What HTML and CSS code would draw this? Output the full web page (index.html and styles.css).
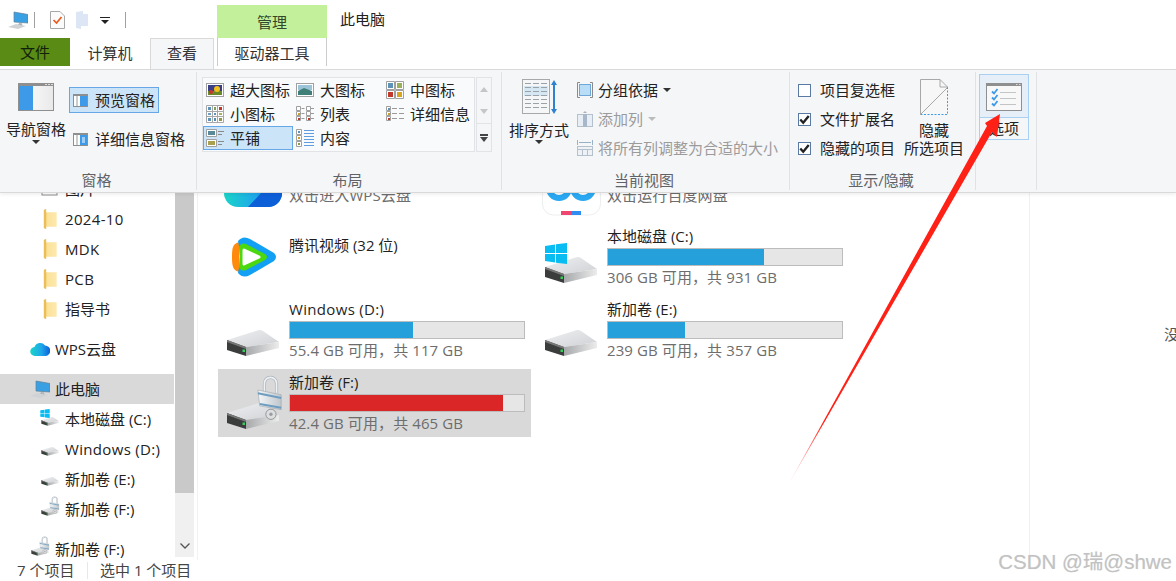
FILE: index.html
```html
<!DOCTYPE html>
<html lang="zh-CN">
<head>
<meta charset="utf-8">
<title>此电脑</title>
<link rel="stylesheet" href="styles.css">
</head>
<body>
<svg class="defs" aria-hidden="true">
  <defs>
    <linearGradient id="gDriveTop" x1="0" y1="0" x2="1" y2="1"><stop offset="0" stop-color="#eef0f2"/><stop offset="1" stop-color="#cfd1d4"/></linearGradient>
    <linearGradient id="gDriveSide" x1="0" y1="0" x2="1" y2="0"><stop offset="0" stop-color="#a6a8aa"/><stop offset="1" stop-color="#ececec"/></linearGradient>
    <linearGradient id="gCloud" x1="0" y1="0" x2="1" y2="0"><stop offset="0" stop-color="#19d4c8"/><stop offset=".55" stop-color="#1ea8ea"/><stop offset="1" stop-color="#0d5fd8"/></linearGradient>
    <linearGradient id="gFolder" x1="0" y1="0" x2="1" y2="0"><stop offset="0" stop-color="#f0c869"/><stop offset=".3" stop-color="#fbe29c"/><stop offset="1" stop-color="#fde8ad"/></linearGradient>
    <linearGradient id="gNav" x1="0" y1="0" x2="1" y2="0"><stop offset="0" stop-color="#fff"/><stop offset="1" stop-color="#e9e9e9"/></linearGradient>
    <linearGradient id="gLock" x1="0" y1="0" x2="1" y2="0"><stop offset="0" stop-color="#f4f6f8"/><stop offset="1" stop-color="#bfc6cc"/></linearGradient>
    <linearGradient id="gArrow" gradientUnits="userSpaceOnUse" x1="787" y1="487" x2="825" y2="421"><stop offset="0" stop-color="#ff2016" stop-opacity="0"/><stop offset="1" stop-color="#ff2016"/></linearGradient>

    <symbol id="drive" viewBox="0 0 71 68">
      <path d="M9 44 41 34Q43 33.500 45 35L61 46 28 51Z" fill="url(#gDriveTop)"/>
      <path d="M28 51 61 46 61 52 28 60Z" fill="url(#gDriveSide)"/>
      <path d="M9 44 28 51 28 60 9 54Z" fill="#3b3d3d"/>
      <path d="M9 44 28 51 28 53 9 46Z" fill="#777"/>
      <rect x="24.500" y="53.500" width="2.500" height="2.500" fill="#35d05a"/>
    </symbol>
    <symbol id="win" viewBox="0 0 22 21">
      <path d="M0 3 10 1.500V10H0ZM11 1.300 22 0V10H11ZM0 11H10V19.500L0 18ZM11 11H22V21L11 19.700Z" fill="#09bdf3"/>
    </symbol>
    <symbol id="lock" viewBox="0 0 30 48">
      <path d="M9 20V9a6.500 6.500 0 0 1 13 0V19" fill="none" stroke="#aab2ba" stroke-width="3.400"/>
      <path d="M9 20V9a6.500 6.500 0 0 1 13 0V19" fill="none" stroke="#eef1f4" stroke-width="1.800"/>
      <circle cx="16" cy="42" r="5.500" fill="#dcdedf" stroke="#8f9294"/>
      <circle cx="16" cy="42" r="1.800" fill="#9a9c9e"/>
      <path d="M2 16 27 21V37L4 33Z" fill="url(#gLock)" stroke="#9aa2a8" stroke-width=".6"/>
      <path d="M2 19.500 27 24.500M4 31 27 35" stroke="#6f9dc0" stroke-width="2.200" fill="none"/>
    </symbol>
    <symbol id="pc" viewBox="0 0 20 18">
      <path d="M0 16 8 13 18 15 10 18Z" fill="#cfd3d6"/>
      <path d="M6 1 20 3.500V12L6 11Z" fill="#3aa0e4" stroke="#5f7f96" stroke-width=".7"/>
      <path d="M11 12 14 12.200 14.500 14.500 10 13.800Z" fill="#b0b5ba"/>
    </symbol>
    <symbol id="folder" viewBox="0 0 13 18">
      <path d="M1 1 3 0V3H12.500V16H3V18L1 17Z" fill="url(#gFolder)"/>
      <path d="M1 1 3 0V18L1 17Z" fill="#eabf5a"/>
    </symbol>
    <symbol id="pane-nav" viewBox="0 0 36 28">
      <rect x=".5" y=".5" width="35" height="27" fill="url(#gNav)" stroke="#8f8f8f"/>
      <rect x="0" y="0" width="36" height="3" fill="#8f8f8f"/>
      <rect x="1" y="3" width="14" height="24" fill="#3d9ae8"/>
      <path d="M27 1.500h2M30 1.500h2M33 1.500h2" stroke="#ddd"/>
    </symbol>
    <symbol id="pane-small" viewBox="0 0 15 13">
      <rect x=".5" y=".5" width="14" height="12" fill="#fff" stroke="#8f8f8f"/>
      <rect x="0" y="0" width="15" height="2" fill="#8f8f8f"/>
      <rect x="3" y="2" width="2" height="10" fill="#ccc"/>
      <rect x="7" y="2" width="7" height="10" fill="#3d9ae8"/>
    </symbol>
    <symbol id="pane-details" viewBox="0 0 15 13">
      <rect x=".5" y=".5" width="14" height="12" fill="#fff" stroke="#8f8f8f"/>
      <rect x="0" y="0" width="15" height="2" fill="#8f8f8f"/>
      <rect x="3" y="2" width="2" height="10" fill="#ccc"/>
      <rect x="7" y="2" width="7" height="10" fill="#3d9ae8"/>
      <path d="M9 5h3M9 7h3M9 9h3" stroke="#fff"/>
    </symbol>
    <symbol id="v-xl" viewBox="0 0 18 14">
      <rect x=".5" y=".5" width="17" height="13" fill="#fff" stroke="#a0a0a0"/>
      <rect x="2" y="2" width="14" height="10" fill="#3b3f86"/>
      <rect x="2" y="8" width="14" height="4" fill="#6a8a2a"/>
      <circle cx="11" cy="6" r="3" fill="#f2c21a"/><circle cx="5" cy="9" r="2" fill="#c8342c"/>
    </symbol>
    <symbol id="v-lg" viewBox="0 0 18 14">
      <rect x=".5" y=".5" width="17" height="13" fill="#fff" stroke="#a0a0a0"/>
      <rect x="2" y="2" width="14" height="5" fill="#9cc4d8"/>
      <path d="M2 8 8 5 16 8V12H2Z" fill="#3f7f78"/>
    </symbol>
    <symbol id="v-md" viewBox="0 0 18 18">
      <path d="M.5.500h8v8h-8zM9.500.500h8v8h-8zM.5 9.500h8v8h-8zM9.500 9.500h8v8h-8z" fill="#fff" stroke="#a0a0a0"/>
      <rect x="2" y="2" width="5" height="5" fill="#5e93b8"/><rect x="11" y="2" width="5" height="5" fill="#9ab05a"/>
      <rect x="2" y="11" width="5" height="5" fill="#c0392b"/><rect x="11" y="11" width="5" height="5" fill="#d9a520"/>
    </symbol>
    <symbol id="v-sm" viewBox="0 0 18 18">
      <path d="M.5.500h17v17h-17zM6.500.500v17M11.500.500v17M.5 6.500h17M.5 11.500h17" fill="#fff" stroke="#a8a8a8"/>
      <path d="M2 2h3v3H2z" fill="#5e93b8"/><path d="M8 2h2v3H8z" fill="#7ba05a"/><path d="M13 2h3v3h-3z" fill="#c0392b"/>
      <path d="M2 8h3v2H2z" fill="#6f9fc0"/><path d="M8 8h2v2H8z" fill="#5e93b8"/><path d="M13 8h3v2h-3z" fill="#a9b45a"/>
      <path d="M2 13h3v3H2z" fill="#5e93b8"/><path d="M8 13h2v3H8z" fill="#4f8fb0"/><path d="M13 13h3v3h-3z" fill="#8c9a4a"/>
    </symbol>
    <symbol id="v-list" viewBox="0 0 18 16">
      <path d="M.5.500h4v4h-4zM.5 5.500h4v4h-4zM.5 10.500h4v4h-4zM10.500.500h4v4h-4zM10.500 5.500h4v4h-4zM10.500 10.500h4v4h-4z" fill="#fff" stroke="#a0a0a0"/>
      <path d="M5.500 2.500h3M5.500 7.500h3M5.500 12.500h3M15 2.500h3M15 7.500h3M15 12.500h3" stroke="#9a9a9a"/>
      <rect x="2" y="12" width="2" height="2" fill="#c0392b"/><rect x="12" y="12" width="2" height="2" fill="#c0392b"/><rect x="2" y="7" width="2" height="2" fill="#c9a227"/>
    </symbol>
    <symbol id="v-detail" viewBox="0 0 18 16">
      <path d="M.5.500h4v4h-4zM.5 5.500h4v4h-4zM.5 10.500h4v4h-4z" fill="#fff" stroke="#a0a0a0"/>
      <path d="M6 2.500h5M13 2.500h5M6 7.500h5M13 7.500h5M6 12.500h5M13 12.500h5" stroke="#9a9a9a"/>
      <rect x="2" y="2" width="2" height="2" fill="#5e93b8"/><rect x="2" y="7" width="2" height="2" fill="#c9a227"/><rect x="2" y="12" width="2" height="2" fill="#c0392b"/>
    </symbol>
    <symbol id="v-tile" viewBox="0 0 18 18">
      <path d="M.5.500h10v7h-10zM.5 10.500h10v7h-10z" fill="#fff" stroke="#a0a0a0"/>
      <rect x="2" y="2" width="7" height="4" fill="#5a8a9a"/><rect x="2" y="12" width="7" height="4" fill="#a9a050"/>
      <path d="M12 2.500h6M12 5.500h4M12 12.500h6M12 15.500h4" stroke="#8a8a8a"/>
    </symbol>
    <symbol id="v-content" viewBox="0 0 18 18">
      <path d="M.5.500h5v5h-5zM.5 6.500h5v5h-5zM.5 12.500h5v5h-5z" fill="#fff" stroke="#a0a0a0"/>
      <path d="M8 1.500h10M8 4.500h10M8 7.500h10M8 10.500h10M8 13.500h10M8 16.500h10" stroke="#5e9de0"/>
      <rect x="2" y="8" width="2" height="2" fill="#c9a227"/><rect x="2" y="14" width="2" height="2" fill="#8c9a4a"/><rect x="2" y="2" width="2" height="2" fill="#5e93b8"/>
    </symbol>
    <symbol id="check" viewBox="0 0 13 13">
      <path d="M1.500 6.500 5 10.300 11.500 2.500" fill="none" stroke="#222" stroke-width="2.800"/>
    </symbol>
  </defs>
</svg>

<div class="app">
  <header class="titlebar">
    <div class="qat">
      <svg class="ico-pc"><use href="#pc"/></svg>
      <span class="qat-sep first"></span>
      <svg class="ico-doc" viewBox="0 0 15 18"><path d="M.5.500H10L14.500 5V17.500H.5Z" fill="#fbfbfb" stroke="#a8a8a8"/><path d="M3.500 9 6.500 12 11.500 6" fill="none" stroke="#ea5a1c" stroke-width="1.700"/></svg>
      <svg class="ico-qfolder" viewBox="0 0 12 18"><path d="M0 1 7 0V3H12V15H5V18L0 17Z" fill="#dce6f4"/></svg>
      <svg class="ico-drop" viewBox="0 0 10 7"><path d="M0 0H10V1H0ZM1 3H9L5 7Z" fill="#222"/></svg>
      <span class="qat-sep"></span>
    </div>
    <div class="tab-manage">管理</div>
    <div class="window-title">此电脑</div>
  </header>

  <nav class="tabs">
    <div class="tab tab-file">文件</div>
    <div class="tab tab-computer">计算机</div>
    <div class="tab tab-view">查看</div>
    <div class="tab tab-drive">驱动器工具</div>
  </nav>

  <section class="ribbon">
    <div class="group g-pane">
      <div class="group-body">
        <div class="big-btn">
          <div class="big-ico"><svg class="ico-36"><use href="#pane-nav"/></svg></div>
          <div class="big-text">导航窗格</div>
          <div class="caret"></div>
        </div>
        <div class="pane-col">
          <div class="small-btn active"><svg class="ico-15"><use href="#pane-small"/></svg><span>预览窗格</span></div>
          <div class="small-btn"><svg class="ico-15"><use href="#pane-details"/></svg><span>详细信息窗格</span></div>
        </div>
      </div>
      <div class="group-label">窗格</div>
    </div>

    <div class="group g-layout">
      <div class="group-body">
        <div class="gallery">
          <div class="g-item"><svg class="ico-18"><use href="#v-xl"/></svg><span>超大图标</span></div>
          <div class="g-item"><svg class="ico-18"><use href="#v-lg"/></svg><span>大图标</span></div>
          <div class="g-item"><svg class="ico-18"><use href="#v-md"/></svg><span>中图标</span></div>
          <div class="g-item"><svg class="ico-18"><use href="#v-sm"/></svg><span>小图标</span></div>
          <div class="g-item"><svg class="ico-18"><use href="#v-list"/></svg><span>列表</span></div>
          <div class="g-item"><svg class="ico-18"><use href="#v-detail"/></svg><span>详细信息</span></div>
          <div class="g-item selected"><svg class="ico-18"><use href="#v-tile"/></svg><span>平铺</span></div>
          <div class="g-item"><svg class="ico-18"><use href="#v-content"/></svg><span>内容</span></div>
        </div>
        <div class="scroller">
          <div class="sc-cell"><i class="tri-up"></i></div>
          <div class="sc-cell"><i class="tri-down"></i></div>
          <div class="sc-cell more"><i class="bar"></i><i class="tri-down dark"></i></div>
        </div>
      </div>
      <div class="group-label">布局</div>
    </div>

    <div class="group g-view">
      <div class="group-body">
        <div class="big-btn">
          <div class="big-ico">
            <svg class="ico-sort" viewBox="0 0 35 36">
              <rect x=".5" y=".5" width="27" height="34" fill="#f4f6f8" stroke="#a8a8a8"/>
              <rect x="2" y="7" width="24" height="10" fill="#d4e7f3"/>
              <path d="M3 4.500h6M11 4.500h6M19 4.500h6M3 8.500h6M11 8.500h6M19 8.500h6M3 12.500h6M11 12.500h6M19 12.500h6M3 16.500h6M11 16.500h6M19 16.500h6M3 20.500h6M11 20.500h6M19 20.500h6M3 24.500h6M11 24.500h6M19 24.500h6M3 28.500h6M11 28.500h6M19 28.500h6" stroke="#9aa2a8"/>
              <path d="M32 1 35 6H33V30H35L32 35 29 30H31V6H29Z" fill="#2f82cf"/>
            </svg>
          </div>
          <div class="big-text">排序方式</div>
          <div class="caret"></div>
        </div>
        <div class="view-col">
          <div class="v-row">
            <svg class="ico-16" viewBox="0 0 16 16"><path d="M3 .5H.5v15H3M13 .5h2.500v15H13" fill="none" stroke="#8a8a8a"/><rect x="2.500" y="2.500" width="11" height="11" fill="#b9dcf7" stroke="#6fa8d8"/></svg>
            <span>分组依据</span><i class="caret inline"></i>
          </div>
          <div class="v-row dim">
            <svg class="ico-16" viewBox="0 0 16 16"><path d="M8 0 10 2H6Z" fill="#b0b0b0"/><rect x=".5" y="3.500" width="15" height="12" fill="#e8eef5" stroke="#b4c0cc"/><rect x="6" y="3" width="4" height="13" fill="#a9b8c8"/></svg>
            <span>添加列</span><i class="caret inline light"></i>
          </div>
          <div class="v-row dim">
            <svg class="ico-16" viewBox="0 0 16 16"><path d="M.5 0v5M15.500 0v5M2 2.500h12" stroke="#9ab0c4" fill="none"/><rect x=".5" y="6.500" width="15" height="9" fill="#eef2f6" stroke="#b4c0cc"/><path d="M.5 9.500h15M5.500 9.500v6M10.500 9.500v6" stroke="#b4c0cc"/></svg>
            <span>将所有列调整为合适的大小</span>
          </div>
        </div>
      </div>
      <div class="group-label">当前视图</div>
    </div>

    <div class="group g-show">
      <div class="group-body">
        <div class="check-col">
          <div class="c-row"><span class="box"></span><span>项目复选框</span></div>
          <div class="c-row"><span class="box"><svg class="ico-13"><use href="#check"/></svg></span><span>文件扩展名</span></div>
          <div class="c-row"><span class="box"><svg class="ico-13"><use href="#check"/></svg></span><span>隐藏的项目</span></div>
        </div>
        <div class="hide-btn">
          <svg class="ico-hide" viewBox="0 0 28 36"><path d="M.5.500H20L27.500 8V35.500H.5Z" fill="#f7f7f7"/><path d="M27.500 8V35.500H.5" fill="none" stroke="#3d9ae8" stroke-dasharray="2 1.500"/><path d="M.5 35.500V.5H20L27.500 8H20V.5M.5 35.500 27 9" fill="none" stroke="#a8a8a8"/></svg>
          <div class="hide-text">隐藏<br>所选项目</div>
        </div>
      </div>
      <div class="group-label">显示/隐藏</div>
    </div>

    <div class="group g-opt">
      <div class="opt-btn">
        <div class="opt-top">
          <svg class="ico-36" viewBox="0 0 36 28">
            <rect x=".5" y=".5" width="35" height="27" fill="#f8f8f8" stroke="#8f8f8f"/>
            <rect width="36" height="3" fill="#8f8f8f"/>
            <path d="M30 1.500h1.500M33 1.500h1.500" stroke="#ddd"/>
            <path d="M6 8.500 8 10.500 11.500 6M6 14.500 8 16.500 11.500 12M6 20.500 8 22.500 11.500 18" fill="none" stroke="#3d9ae8" stroke-width="1.800"/>
            <path d="M14 9.500H30M14 15.500H30M14 21.500H30" stroke="#c4c4c4"/>
          </svg>
        </div>
        <div class="opt-bottom">选项</div>
      </div>
    </div>
  </section>

  <div class="content">
    <aside class="sidebar">
      <div class="tree">
        <div class="t-row lv2"><svg class="ico-nav" viewBox="0 0 20 18"><rect x="2" y="2" width="15" height="13" fill="#fff" stroke="#8c8c8c"/></svg><span>图片</span></div>
        <div class="t-row lv2"><svg class="ico-nav"><use href="#folder"/></svg><span class="latin">2024-10</span></div>
        <div class="t-row lv2"><svg class="ico-nav"><use href="#folder"/></svg><span class="latin">MDK</span></div>
        <div class="t-row lv2"><svg class="ico-nav"><use href="#folder"/></svg><span class="latin">PCB</span></div>
        <div class="t-row lv2 gap-after"><svg class="ico-nav"><use href="#folder"/></svg><span>指导书</span></div>
        <div class="t-row lv1 gap-after"><svg class="ico-nav" viewBox="0 0 20 16"><path d="M5 15a4.500 4.500 0 0 1-.5-9A6 6 0 0 1 15 4.500 5.200 5.200 0 0 1 15 15Z" fill="url(#gCloud)"/></svg><span>WPS云盘</span></div>
        <div class="t-row lv1 current"><svg class="ico-nav"><use href="#pc"/></svg><span>此电脑</span></div>
        <div class="t-row lv2">
          <span class="nav-stack"><svg class="nav-drive" viewBox="5 28 60 36"><use href="#drive" width="71" height="68"/></svg><svg class="nav-win"><use href="#win"/></svg></span>
          <span>本地磁盘 (C:)</span>
        </div>
        <div class="t-row lv2"><span class="nav-stack"><svg class="nav-drive" viewBox="5 28 60 36"><use href="#drive" width="71" height="68"/></svg></span><span class="latin">Windows (D:)</span></div>
        <div class="t-row lv2"><span class="nav-stack"><svg class="nav-drive" viewBox="5 28 60 36"><use href="#drive" width="71" height="68"/></svg></span><span>新加卷 (E:)</span></div>
        <div class="t-row lv2 gap-after"><span class="nav-stack"><svg class="nav-drive" viewBox="5 28 60 36"><use href="#drive" width="71" height="68"/></svg><svg class="nav-lock"><use href="#lock"/></svg></span><span>新加卷 (F:)</span></div>
        <div class="t-row lv1"><span class="nav-stack"><svg class="nav-drive" viewBox="5 28 60 36"><use href="#drive" width="71" height="68"/></svg><svg class="nav-lock"><use href="#lock"/></svg></span><span>新加卷 (F:)</span></div>
      </div>
      <div class="vscroll">
        <div class="thumb"></div>
        <div class="track"><svg class="chev" viewBox="0 0 10 6"><path d="M.5.500 5 5 9.500.500" fill="none" stroke="#555" stroke-width="1.300"/></svg></div>
      </div>
    </aside>

    <main class="main">
      <div class="tiles">
        <div class="tile">
          <svg class="tile-ico" viewBox="0 0 71 68"><path d="M20 57A14 14 0 0 1 6 43V20H64V43A14 14 0 0 1 50 57Z" fill="url(#gCloud)"/><path d="M30 57 46 40H64V43A14 14 0 0 1 50 57Z" fill="#0d5fd8"/></svg>
          <div class="tile-text top"><div class="t-sub">双击进入WPS云盘</div></div>
        </div>
        <div class="tile">
          <svg class="tile-ico" viewBox="0 0 71 68"><rect x="6.500" y="-6" width="58" height="71" rx="11" fill="#fff" stroke="#eceef0"/><circle cx="23" cy="38" r="10" fill="none" stroke="#2aa8f2" stroke-width="6"/><circle cx="47" cy="38" r="10" fill="none" stroke="#2aa8f2" stroke-width="6"/><rect x="25" y="61" width="10" height="4" fill="#f0456e"/><rect x="35" y="61" width="10" height="4" fill="#2f8cf0"/></svg>
          <div class="tile-text top"><div class="t-sub">双击运行百度网盘</div></div>
        </div>

        <div class="tile">
          <svg class="tile-ico" viewBox="0 0 71 68">
            <path d="M21 19C15 21 14 24 14 34S15 47 21 49Z" fill="#ff8a0c"/>
            <path d="M20 18Q25 12 32 16L56 30Q60 34 56 38L32 52Q25 56 20 50Q24 34 20 18Z" fill="#12a0f4"/>
            <path d="M21 24Q23 19 28 21L47 31Q51 34 47 37L28 47Q23 49 21 44Q22 34 21 24Z" fill="#4bd80e"/>
            <path d="M26 27 41 34 26 41Z" fill="#fff" stroke="#fff" stroke-width="3" stroke-linejoin="round"/>
          </svg>
          <div class="tile-text app"><div class="t-name">腾讯视频 (32 位)</div></div>
        </div>
        <div class="tile">
          <span class="tile-stack"><svg class="tile-ico"><use href="#drive"/></svg><svg class="win-badge"><use href="#win"/></svg></span>
          <div class="tile-text"><div class="t-name">本地磁盘 (C:)</div><div class="bar"><div class="fill" style="width:66.600%"></div></div><div class="t-sub">306 GB 可用，共 931 GB</div></div>
        </div>

        <div class="tile">
          <svg class="tile-ico"><use href="#drive"/></svg>
          <div class="tile-text"><div class="t-name latin">Windows (D:)</div><div class="bar"><div class="fill" style="width:52.400%"></div></div><div class="t-sub">55.4 GB 可用，共 117 GB</div></div>
        </div>
        <div class="tile">
          <svg class="tile-ico"><use href="#drive"/></svg>
          <div class="tile-text"><div class="t-name">新加卷 (E:)</div><div class="bar"><div class="fill" style="width:32.800%"></div></div><div class="t-sub">239 GB 可用，共 357 GB</div></div>
        </div>

        <div class="tile picked">
          <span class="tile-stack"><svg class="tile-ico"><use href="#drive"/></svg><svg class="lock-badge"><use href="#lock"/></svg></span>
          <div class="tile-text"><div class="t-name">新加卷 (F:)</div><div class="bar"><div class="fill full" style="width:90.900%"></div></div><div class="t-sub">42.4 GB 可用，共 465 GB</div></div>
        </div>
      </div>
    </main>

    <aside class="preview"><div class="preview-text">没有预览</div></aside>
  </div>

  <footer class="status"><span class="st-a">7 个项目</span><span class="st-b">选中 1 个项目</span></footer>

  <svg class="arrow" viewBox="0 0 1176 581" aria-hidden="true">
    <path d="M1000 114 997 137 992 132 787 487 987 126 985 123Z" fill="url(#gArrow)"/>
  </svg>
  <div class="watermark">CSDN @瑞@shwe</div>
</div>
</body>
</html>
```

FILE: styles.css
```css
* { box-sizing: border-box; }
html, body { margin: 0; height: 100%; overflow: hidden; background: #fff; }
body {
  font-family: "Open Sans", "Noto Sans CJK SC", sans-serif;
  font-size: 15px;
  line-height: 19px;
  color: #222;
}
.defs { width: 0; height: 0; display: block; overflow: hidden; }
svg { display: block; flex: none; }

.app { position: relative; display: flex; flex-direction: column; width: 1176px; height: 581px; overflow: hidden; }

/* title row */
.titlebar { display: flex; height: 38px; align-items: flex-end; flex: none; }
.qat { display: flex; align-items: center; width: 217px; height: 38px; padding: 2px 0 0 8px; }
.ico-pc { width: 20px; height: 18px; }
.qat-sep { width: 1px; height: 16px; background: #a0a0a0; margin-left: 15px; }
.qat-sep.first { margin-left: 6px; }
.ico-doc { width: 15px; height: 18px; margin-left: 15px; }
.ico-qfolder { width: 12px; height: 18px; margin-left: 11px; }
.ico-drop { width: 10px; height: 7px; margin-left: 12px; }
.tab-manage { width: 110px; height: 33px; background: #c3f09b; text-align: center; line-height: 34px; color: #33472a; }
.window-title { height: 38px; line-height: 38px; padding-left: 13px; color: #222; }

/* tabs */
.tabs { display: flex; height: 31px; flex: none; align-items: flex-start; }
.tab { text-align: center; height: 31px; }
.tab-file { width: 70px; height: 28px; line-height: 29px; background: #5a8b14; color: #10200a; }
.tab-computer { width: 80px; color: #333; line-height: 30px; }
.tab-view { width: 64px; background: #f5f6f8; border: 1px solid #d9d9d9; border-bottom: 0; line-height: 29px; color: #333; }
.tab-drive { width: 110px; margin-left: 3px; height: 28px; border-left: 1px solid #ccc; border-right: 1px solid #ccc; line-height: 31px; color: #333; }

/* ribbon */
.ribbon {
  position: relative;
  z-index: 2;
  flex: none;
  display: flex;
  height: 124px;
  padding: 2px 0;
  background: #f5f6f8;
  border-top: 1px solid #d9d9d9;
  border-bottom: 1px solid #d9d9d9;
  box-shadow: 0 2px 3px rgba(0, 0, 0, .06);
}
.group { display: flex; flex-direction: column; border-right: 1px solid #e0e2e5; }
.group-body { display: flex; flex: 1; min-height: 0; }
.group-label { height: 20px; line-height: 20px; text-align: center; padding-right: 3px; color: #5f6368; }
.g-pane { width: 197px; }
.g-layout { width: 305px; }
.g-view { width: 288px; }
.g-show { width: 186px; }
.g-opt { width: 61px; }

.big-btn { width: 60px; display: flex; flex-direction: column; align-items: center; padding-top: 4px; }
.g-pane .big-btn { margin-left: 6px; }
.g-view .big-btn { margin-left: 7px; }
.big-ico { height: 42px; display: flex; align-items: center; }
.big-text { margin-top: 3px; white-space: nowrap; }
.g-pane .big-text { margin: 2px 0 1px; }
.caret { width: 0; height: 0; border-left: 4px solid transparent; border-right: 4px solid transparent; border-top: 4px solid #333; }
.caret.inline { display: inline-block; }
.caret.light { border-top-color: #bbb; }

.ico-36 { width: 36px; height: 28px; }
.ico-15 { width: 15px; height: 13px; }
.ico-16 { width: 16px; height: 16px; }
.ico-18 { width: 18px; height: 18px; }
.ico-13 { width: 13px; height: 13px; }
.ico-sort { width: 35px; height: 36px; }

.pane-col { display: flex; flex-direction: column; gap: 13px; margin: 15px 0 0 3px; }
.small-btn { display: flex; align-items: center; gap: 7px; height: 26px; padding-left: 3px; border: 1px solid transparent; white-space: nowrap; width: 90px; }
.small-btn.active { background: #cce4f7; border-color: #66a7e8; }

/* gallery */
.gallery {
  display: grid;
  grid-template-columns: 90px 90px 91px;
  grid-auto-rows: 24px;
  align-content: start;
  width: 273px;
  height: 75px;
  margin: 5px 0 0 5px;
  background: #f9fafb;
  border: 1px solid #e1e3e6;
}
.g-item { display: flex; align-items: center; gap: 6px; padding-left: 2px; border: 1px solid transparent; white-space: nowrap; }
.g-item.selected { background: #cce4f7; border-color: #66a7e8; }
.scroller { display: flex; flex-direction: column; width: 16px; height: 75px; margin: 5px 0 0 1px; border: 1px solid #e1e3e6; }
.sc-cell { flex: 1; display: flex; flex-direction: column; align-items: center; justify-content: center; }
.sc-cell.more { border-top: 1px solid #e1e3e6; gap: 1px; flex: 1.200; }
.tri-up, .tri-down { display: block; width: 0; height: 0; border-left: 4px solid transparent; border-right: 4px solid transparent; }
.tri-up { border-bottom: 5px solid #c4c6c8; }
.tri-down { border-top: 5px solid #c4c6c8; }
.tri-down.dark { border-top-color: #444; }
.sc-cell .bar { display: block; width: 8px; height: 2px; background: #444; border: 0; }

/* current view */
.view-col { display: flex; flex-direction: column; margin: 3.500px 0 0 8px; }
.v-row { display: flex; align-items: center; gap: 5px; height: 29px; white-space: nowrap; }
.v-row.dim { color: #9b9b9b; }

/* show / hide */
.check-col { width: 98px; margin: 3.500px 0 0 8px; }
.c-row { display: flex; align-items: center; gap: 9px; height: 29px; white-space: nowrap; }
.box { width: 13px; height: 13px; background: #fff; border: 1px solid #5b7aa3; display: flex; align-items: center; justify-content: center; flex: none; }
.box svg { width: 11px; height: 11px; }
.hide-btn { width: 60px; margin-left: 8px; padding-top: 7px; display: flex; flex-direction: column; align-items: center; }
.ico-hide { width: 28px; height: 36px; }
.hide-text { margin-top: 6px; text-align: center; line-height: 18px; white-space: nowrap; }

/* options */
.opt-btn { width: 50px; height: 66px; margin: 2px 0 0 3px; border: 1px solid #a9cff3; display: flex; flex-direction: column; }
.opt-top { height: 44px; background: #e6eef8; border-bottom: 1px solid #a9cff3; display: flex; justify-content: center; padding-top: 8px; }
.opt-bottom { flex: 1; text-align: center; line-height: 21px; }

/* content */
.content { flex: 1; display: flex; min-height: 0; overflow: hidden; }
.sidebar { width: 198px; flex: none; display: flex; border-right: 1px solid #f2f2f2; overflow: hidden; }
.tree { width: 175px; flex: none; margin-top: -19px; }
.t-row { display: flex; align-items: center; height: 30px; white-space: nowrap; }
.t-row.lv2 { padding-left: 40px; }
.t-row.lv1 { padding-left: 30px; }
.t-row .ico-nav, .nav-stack { width: 20px; height: 20px; margin-right: 5px; }
.t-row.current { background: #d9d9d9; width: 174px; }
.gap-after { margin-bottom: 10px; }
.nav-stack { position: relative; display: block; flex: none; }
.nav-drive { width: 20px; height: 12px; margin-top: 6px; }
.nav-win { position: absolute; left: 0; top: 0; width: 10px; height: 9px; }
.nav-lock { position: absolute; left: 9px; top: -3px; width: 11px; height: 18px; }
.latin { letter-spacing: .33px; }

.vscroll { width: 19px; flex: none; display: flex; flex-direction: column; height: 364px; }
.thumb { height: 300px; background: #c9c9c9; }
.track { flex: 1; background: #f0f0f0; display: flex; align-items: flex-end; justify-content: center; padding-bottom: 8px; }
.chev { width: 10px; height: 6px; }

.main { width: 831px; flex: none; overflow: hidden; }
.tiles { display: grid; grid-template-columns: 313px 313px; grid-auto-rows: 68px; gap: 5px; margin: -43px 0 0 20px; }
.tile { display: flex; }
.tile.picked { background: #d9d9d9; }
.tile-ico { width: 71px; height: 68px; }
.tile-stack { position: relative; display: block; width: 71px; height: 68px; flex: none; }
.win-badge { position: absolute; left: 9px; top: 20px; width: 22px; height: 21px; }
.lock-badge { position: absolute; left: 38px; top: 5px; width: 28px; height: 47px; }
.tile-text { width: 236px; }
.tile-text.app { padding-top: 9px; }
.tile-text.top { padding-top: 34px; }
.t-name { height: 25px; line-height: 26px; color: #1f1f1f; white-space: nowrap; }
.t-sub { height: 25px; line-height: 23px; color: #6d6d6d; white-space: nowrap; letter-spacing: .1px; }
.bar { height: 18px; background: #e6e6e6; border: 1px solid #bcbcbc; }
.fill { height: 100%; background: #26a0da; }
.fill.full { background: #da2626; }

.preview { flex: 1; min-width: 0; border-left: 1px solid #f0f0f0; padding: 132px 0 0 134px; overflow: hidden; color: #555; white-space: nowrap; }
.preview-text { width: 100px; }

.status { flex: none; height: 21px; display: flex; color: #444; background: #fff; }
.st-a { width: 88px; padding-left: 17px; border-right: 1px solid #e8e8e8; height: 17px; margin-top: 2px; line-height: 17px; }
.st-b { padding-left: 12px; height: 17px; margin-top: 2px; line-height: 17px; }

/* annotations drawn over the screenshot */
.arrow { position: absolute; left: 0; top: 0; width: 1176px; height: 581px; z-index: 5; pointer-events: none; }
.watermark {
  position: absolute;
  right: 4px;
  bottom: 7px;
  z-index: 6;
  font-family: "Liberation Sans", "Noto Sans CJK SC", sans-serif;
  font-size: 20.500px;
  line-height: 24px;
  color: #c2c2c2;
  text-shadow: 0 0 1px #e0e0e0;
  white-space: nowrap;
}
```
